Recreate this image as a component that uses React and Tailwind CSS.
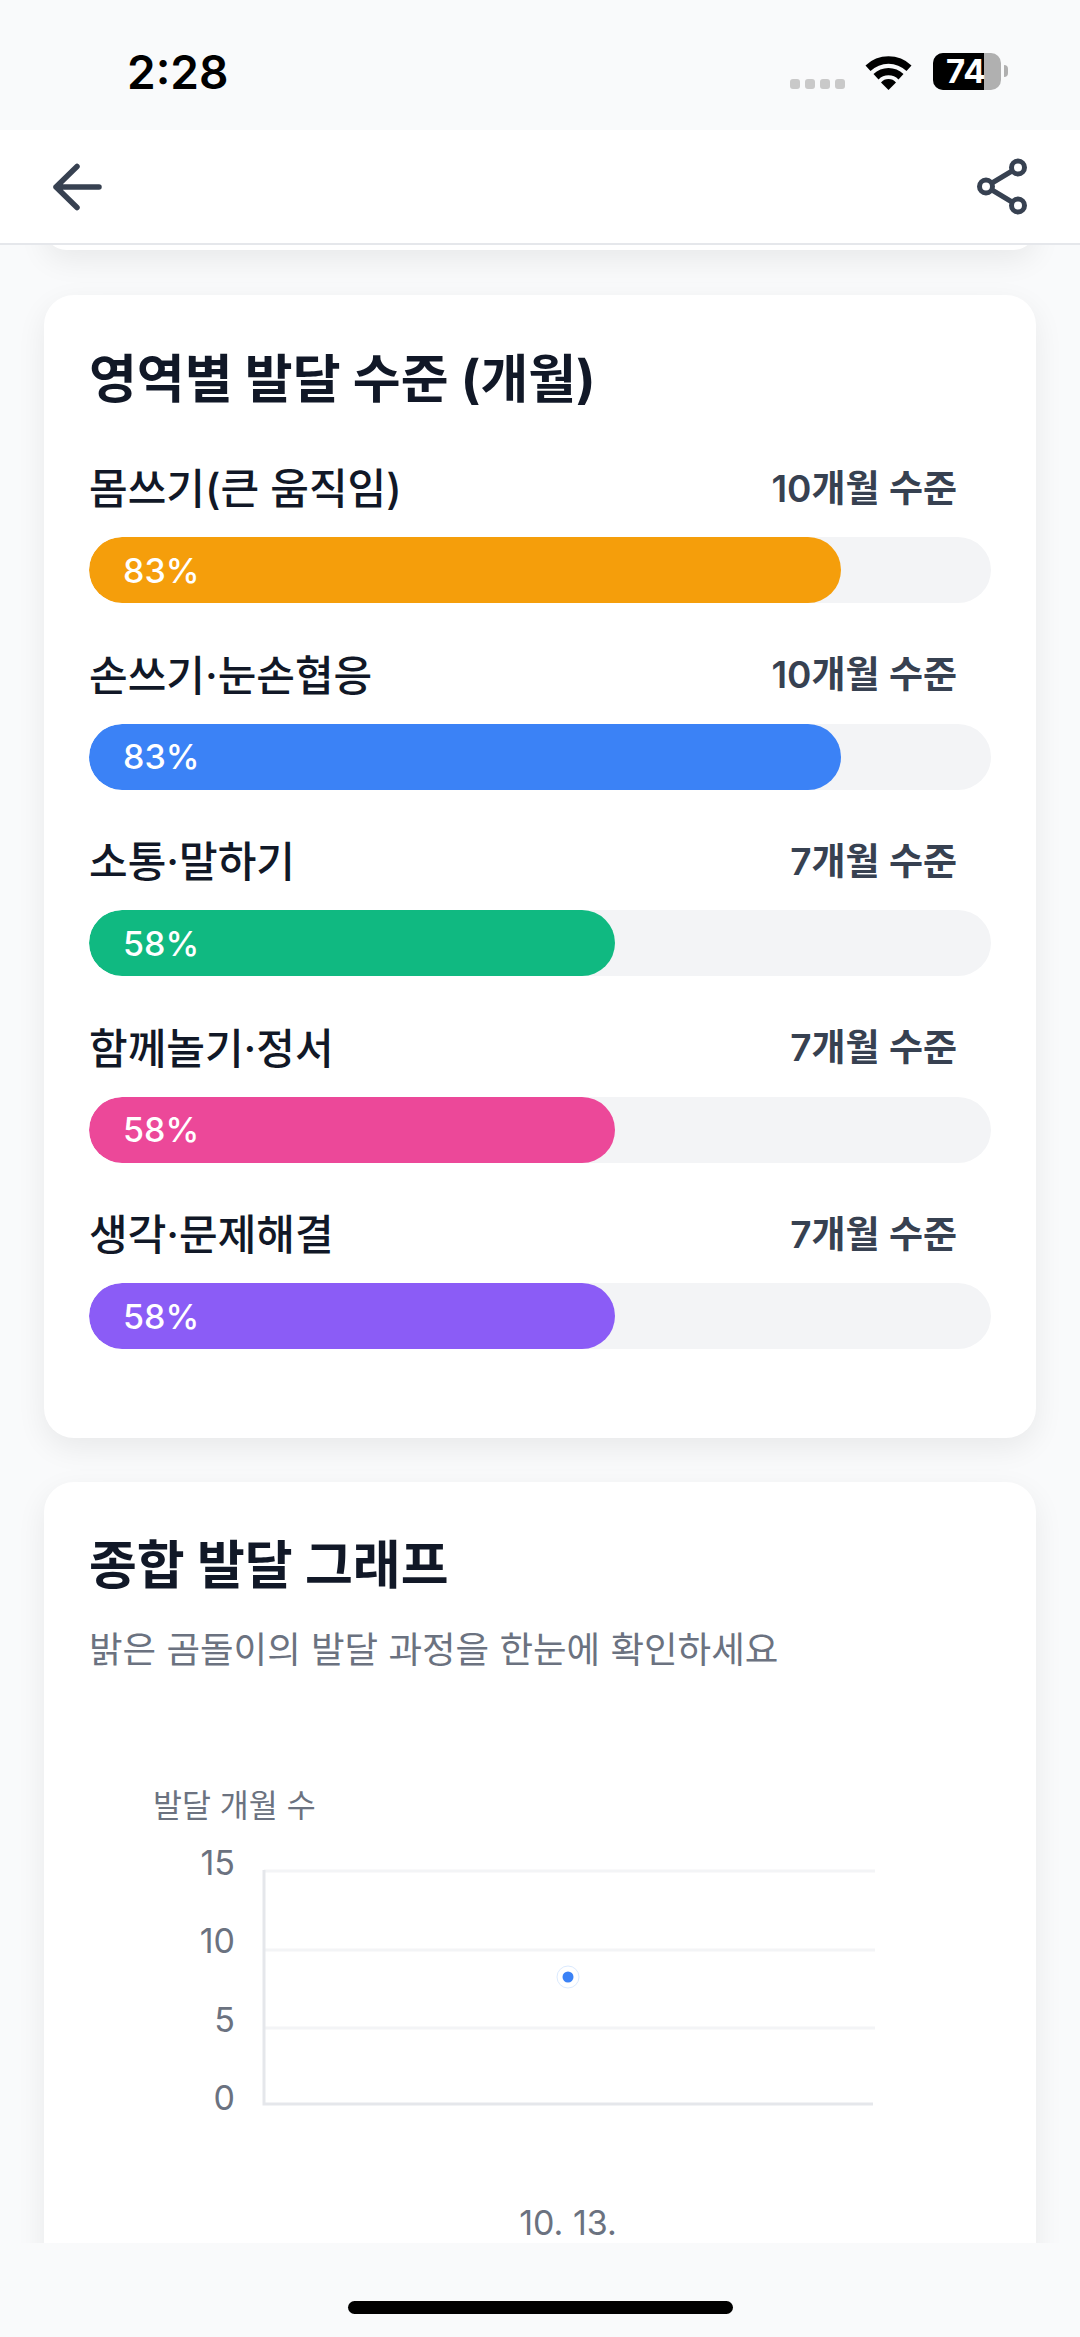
const FONT = "font-['Inter','Noto_Sans_CJK_KR',sans-serif]";

const levels = [
  { name: "몸쓰기(큰 움직임)", months: 10, percent: 83, color: "bg-[#f59e0b]" },
  { name: "손쓰기·눈손협응", months: 10, percent: 83, color: "bg-[#3b82f6]" },
  { name: "소통·말하기", months: 7, percent: 58, color: "bg-[#10b981]" },
  { name: "함께놀기·정서", months: 7, percent: 58, color: "bg-[#ec4899]" },
  { name: "생각·문제해결", months: 7, percent: 58, color: "bg-[#8b5cf6]" },
];

const StatusBar = () => (
  <div className="h-[130px] shrink-0 bg-[#f9fafb] flex items-start justify-between pl-[127px] pr-[72px]">
    <span className="mt-[44px] text-[46px] leading-[56px] font-semibold text-black">2:28</span>
    <div className="mt-[53px] flex items-start">
      <div className="mt-[26px] flex gap-[5px]">
        {[0, 1, 2, 3].map((i) => (
          <div key={i} className="w-[10px] h-[10px] rounded-[3px] bg-[#c9c9c9]" />
        ))}
      </div>
      <svg className="ml-[20px] mt-[1px]" width="47" height="36" viewBox="0 0 47 36">
        <path d="M0.5 11.5 A33 33 0 0 1 46.5 11.5 L41.5 17 A26 26 0 0 0 5.5 17 Z" fill="#000" />
        <path d="M8.5 20 A21.5 21.5 0 0 1 38.5 20 L33.5 25.5 A14 14 0 0 0 13.5 25.5 Z" fill="#000" />
        <path d="M16 28.5 A10 10 0 0 1 31 28.5 L23.5 36 Z" fill="#000" />
      </svg>
      <div className="ml-[21px] relative w-[68px] h-[37px] rounded-[10px] bg-[#b0b0b0]">
        <div className="w-[51px] h-full rounded-l-[10px] bg-black" />
        <span className="absolute left-[13px] top-0 text-[33px] leading-[37px] font-bold text-white">74</span>
      </div>
      <div className="ml-[3px] mt-[12px] w-[4px] h-[12px] rounded-r-full bg-[#b0b0b0]" />
    </div>
  </div>
);

const Header = () => (
  <div className="h-[115px] shrink-0 bg-white border-b-2 border-[#e5e7eb] flex items-center justify-between px-[45px] relative z-10">
    <svg width="60" height="60" viewBox="0 0 60 60" fill="none" stroke="#374151" strokeWidth="5.5" strokeLinecap="round" strokeLinejoin="round">
      <path d="M32 9.5 L11 30 L32 50.5 M11 30 H54" />
    </svg>
    <svg width="60" height="60" viewBox="0 0 60 60" fill="none" stroke="#374151" strokeWidth="5">
      <circle cx="43" cy="10.5" r="6.5" />
      <circle cx="11" cy="29.5" r="6.5" />
      <circle cx="43" cy="48.5" r="6.5" />
      <path d="M17 26 L37 14 M17 33 L37 45" />
    </svg>
  </div>
);

const LevelRow = ({ item }) => (
  <div className="mb-[40.5px]">
    <div className="h-[66px] mb-[14px] pb-[3px] flex items-center justify-between pr-[34px]">
      <span className="text-[42px] font-medium text-[#111827]">{item.name}</span>
      <span className="text-[37px] font-semibold text-[#374151]">{item.months}개월 수준</span>
    </div>
    <div className="h-[66px] rounded-full bg-[#f3f4f6] overflow-hidden">
      <div
        className={`h-full rounded-full flex items-center pl-[34px] ${item.color}`}
        style={{ width: `${(item.months / 12) * 100}%` }}
      >
        <span className="text-[34px] font-medium text-white">{item.percent}%</span>
      </div>
    </div>
  </div>
);

const GraphCard = () => (
  <div className="mx-[44px] rounded-[30px] bg-white shadow-[0_10px_30px_rgba(0,0,0,0.07)] p-[45px] h-[900px]">
    <h2 className="text-[52px] leading-[78px] font-bold text-[#111827]">종합 발달 그래프</h2>
    <p className="mt-[20px] text-[36.5px] leading-[50px] text-[#6b7280]">밝은 곰돌이의 발달 과정을 한눈에 확인하세요</p>
    <div className="mt-[110px] -ml-[44px]">
      <svg width="900" height="470" viewBox="0 0 900 470" className="block">
        <g fontFamily="Inter, 'Noto Sans CJK KR', sans-serif" fill="#6b7280">
          <text x="108" y="32" fontSize="31.5">발달 개월 수</text>
          <g fontSize="34">
            <text x="190" y="90" textAnchor="end">15</text>
            <text x="190" y="168" textAnchor="end">10</text>
            <text x="190" y="247" textAnchor="end">5</text>
            <text x="190" y="325" textAnchor="end">0</text>
            <text x="523" y="450" textAnchor="middle">10. 13.</text>
          </g>
        </g>
        <path d="M219 86 H830 M219 165 H830 M219 243 H830" stroke="#f3f4f6" strokeWidth="3" />
        <path d="M219 85 V319 H828" fill="none" stroke="#e5e7eb" strokeWidth="3" />
        <circle cx="523" cy="192" r="11" fill="#fff" stroke="#dbeafe" strokeWidth="1" />
        <circle cx="523" cy="192" r="5.5" fill="#3b82f6" />
      </svg>
    </div>
  </div>
);

export default function App() {
  return (
    <div className={`${FONT} w-[1080px] h-[2337px] overflow-hidden flex flex-col bg-[#f9fafb]`}>
      <StatusBar />
      <Header />
      <main className="flex-1 min-h-0 overflow-hidden">
        <div className="mx-[44px] -mt-[40px] h-[45px] rounded-[30px] bg-white shadow-[0_10px_30px_rgba(0,0,0,0.07)]" />
        <div className="mt-[45px] mx-[44px] rounded-[30px] bg-white shadow-[0_10px_30px_rgba(0,0,0,0.07)] px-[45px] pt-[45px] h-[1143px]">
          <h2 className="text-[52px] leading-[80px] font-bold text-[#111827] mb-[37px]">영역별 발달 수준 (개월)</h2>
          {levels.map((item) => (
            <LevelRow key={item.name} item={item} />
          ))}
        </div>
        <div className="h-[44px]" />
        <GraphCard />
      </main>
      <div className="h-[94px] shrink-0 bg-[#f9fafb] flex justify-center pt-[58px] relative z-10">
        <div className="w-[385px] h-[13px] rounded-full bg-black" />
      </div>
    </div>
  );
}
